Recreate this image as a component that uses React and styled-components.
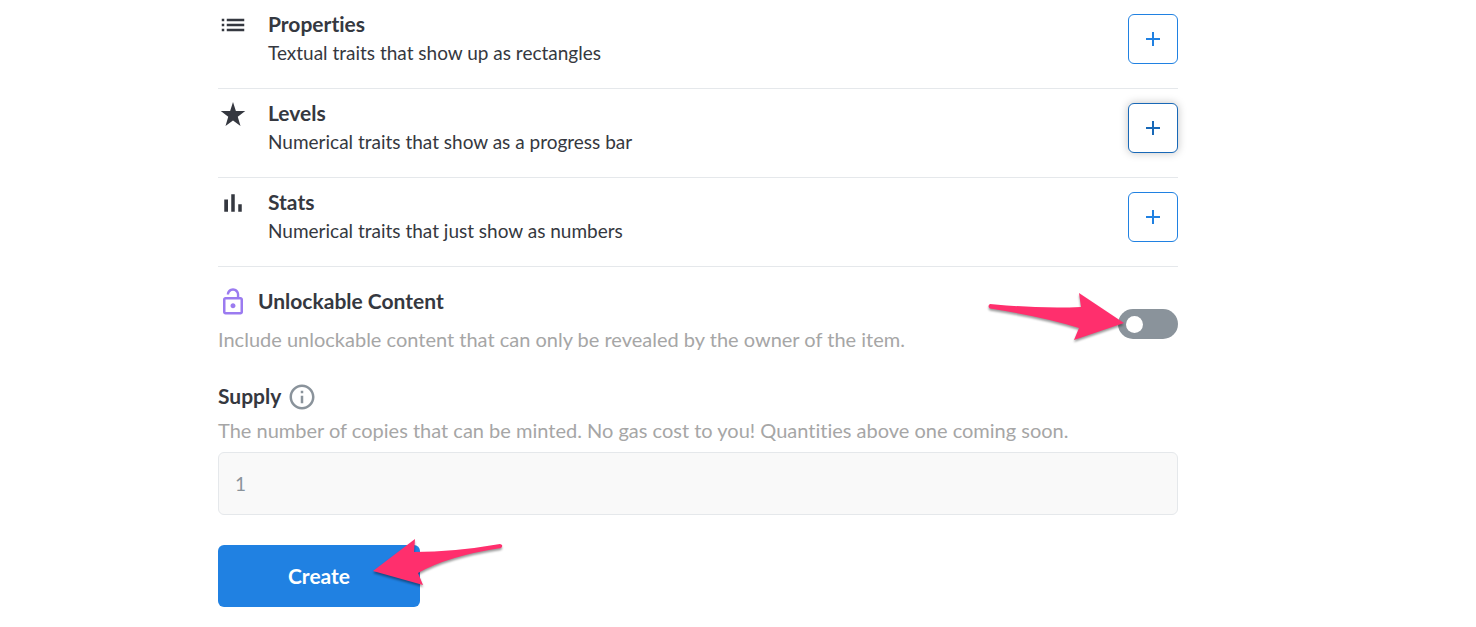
import React from "react";
import styled, { createGlobalStyle } from "styled-components";

const traits = [
  {
    title: "Properties",
    text: "Textual traits that show up as rectangles",
    icon: "M3 13h2v-2H3v2zm0 4h2v-2H3v2zm0-8h2V7H3v2zm4 4h14v-2H7v2zm0 4h14v-2H7v2zM7 7v2h14V7H7z",
  },
  {
    title: "Levels",
    text: "Numerical traits that show as a progress bar",
    icon: "M12 2.4l2.3 7.2h7.5l-6 4.6 2.2 7.4-6-4.5-6 4.5 2.2-7.4-6-4.6h7.5z",
    active: true,
  },
  {
    title: "Stats",
    text: "Numerical traits that just show as numbers",
    icon: "M5 9.2h3V19H5zM10.6 5h2.8v14h-2.8zm5.6 8H19v6h-2.8z",
  },
];

function App() {
  return (
    <>
      <GlobalStyle />
      <Page>
        <Form onSubmit={(e) => e.preventDefault()}>
          {traits.map((trait) => (
            <TraitRow key={trait.title}>
              <TraitIcon viewBox="0 0 24 24" aria-hidden="true">
                <path d={trait.icon} />
              </TraitIcon>
              <TraitInfo>
                <Heading>{trait.title}</Heading>
                <TraitText>{trait.text}</TraitText>
              </TraitInfo>
              <AddButton
                type="button"
                aria-label={`Add ${trait.title}`}
                $active={trait.active}
              >
                <svg viewBox="0 0 14 14" aria-hidden="true">
                  <path d="M0 7h14M7 0v14" />
                </svg>
              </AddButton>
            </TraitRow>
          ))}

          <UnlockRow>
            <div>
              <UnlockTitle>
                <LockIcon viewBox="0 0 24 24" aria-hidden="true">
                  <path d="M12 17c1.1 0 2-.9 2-2s-.9-2-2-2-2 .9-2 2 .9 2 2 2zm6-9h-1V6c0-2.76-2.24-5-5-5S7 3.24 7 6h1.9c0-1.71 1.39-3.1 3.1-3.1 1.71 0 3.1 1.39 3.1 3.1v2H6c-1.1 0-2 .9-2 2v10c0 1.1.9 2 2 2h12c1.1 0 2-.9 2-2V10c0-1.1-.9-2-2-2zm0 12H6V10h12v10z" />
                </LockIcon>
                <Heading as="label" htmlFor="unlockable">
                  Unlockable Content
                </Heading>
              </UnlockTitle>
              <Hint>
                Include unlockable content that can only be revealed by the
                owner of the item.
              </Hint>
            </div>
            <SwitchBox>
              <Switch type="checkbox" role="switch" id="unlockable" />
              <SwitchArrow viewBox="0 0 140 56" aria-hidden="true">
                <path d="M4 14Q55 19 95 17L93 3L138 33L88 50L93 38Q58 27 4 18.5Q1 16 4 14Z" />
              </SwitchArrow>
            </SwitchBox>
          </UnlockRow>

          <SupplyTitle>
            <Heading as="label" htmlFor="supply">
              Supply
            </Heading>
            <InfoIcon viewBox="0 0 24 24" aria-hidden="true">
              <path d="M11 7h2v2h-2zm0 4h2v6h-2zm1-9C6.48 2 2 6.48 2 12s4.48 10 10 10 10-4.48 10-10S17.52 2 12 2zm0 18c-4.41 0-8-3.59-8-8s3.59-8 8-8 8 3.59 8 8-3.59 8-8 8z" />
            </InfoIcon>
          </SupplyTitle>
          <Hint>
            The number of copies that can be minted. No gas cost to you!
            Quantities above one coming soon.
          </Hint>
          <SupplyInput id="supply" type="text" defaultValue="1" readOnly />

          <CreateBox>
            <CreateButton type="submit">Create</CreateButton>
            <CreateArrow viewBox="0 0 140 56" aria-hidden="true">
              <path d="M3 35L45 3L44 16Q84 16 130 8Q134 9 131 12Q78 20 48 37L53 49Z" />
            </CreateArrow>
          </CreateBox>
        </Form>
      </Page>
    </>
  );
}

export default App;

const GlobalStyle = createGlobalStyle`
  * {
    box-sizing: border-box;
  }
  body {
    margin: 0;
    background-color: #ffffff;
    color: #353840;
    font-family: Lato, "Liberation Sans", sans-serif;
    font-size: 19px;
    font-variant-ligatures: none;
  }
`;

const Page = styled.main`
  padding-right: 80px;
  @media screen and (max-width: 1040px) {
    padding: 0 20px;
  }
`;

const Form = styled.form`
  max-width: 960px;
  margin: 0 auto;
`;

const TraitRow = styled.div`
  display: flex;
  align-items: flex-start;
  gap: 20px;
  padding: 9px 0 21px;
  border-bottom: 1px solid #e5e8eb;
`;

const TraitIcon = styled.svg`
  flex: none;
  width: 30px;
  height: 30px;
  margin-top: 1px;
  fill: #353840;
`;

const TraitInfo = styled.div`
  flex: 1;
`;

const Heading = styled.h2`
  margin: 0;
  font-size: 21px;
  font-weight: 700;
  line-height: 29px;
  color: #353840;
`;

const TraitText = styled.p`
  margin: 0;
  font-size: 19px;
  line-height: 29px;
`;

const AddButton = styled.button`
  display: flex;
  align-items: center;
  justify-content: center;
  flex: none;
  width: 50px;
  height: 50px;
  margin-top: 5px;
  padding: 0;
  border: 1px solid ${({ $active }) => ($active ? "#1868b7" : "#2081e2")};
  border-radius: 6px;
  background-color: #ffffff;
  color: ${({ $active }) => ($active ? "#1868b7" : "#2081e2")};
  box-shadow: ${({ $active }) =>
    $active ? "0 0 8px rgba(14, 14, 14, 0.25)" : "none"};
  cursor: pointer;

  svg {
    width: 14px;
    height: 14px;
    stroke: currentColor;
    stroke-width: 2;
  }
`;

const UnlockRow = styled.div`
  display: flex;
  align-items: center;
  justify-content: space-between;
  padding-top: 19px;
`;

const UnlockTitle = styled.div`
  display: flex;
  align-items: flex-start;
  gap: 10px;
  margin-bottom: 8px;
`;

const LockIcon = styled.svg`
  width: 30px;
  height: 30px;
  margin-top: 1px;
  fill: #9b7bf0;
`;

const Hint = styled.p`
  margin: 0;
  font-size: 20px;
  line-height: 29px;
  color: #a6a6a6;
`;

const SwitchBox = styled.div`
  position: relative;
  flex: none;
  height: 30px;
  margin-top: 8px;
`;

const Switch = styled.input`
  appearance: none;
  display: flex;
  align-items: center;
  width: 60px;
  height: 30px;
  margin: 0;
  padding: 0 8px;
  border-radius: 15px;
  background-color: #8a939b;
  cursor: pointer;

  &::before {
    content: "";
    width: 17px;
    height: 17px;
    border-radius: 50%;
    background-color: #ffffff;
  }
  &:checked {
    justify-content: flex-end;
    background-color: #2081e2;
  }
`;

const Arrow = styled.svg`
  position: absolute;
  width: 140px;
  height: 56px;
  fill: #ff2f6d;
  filter: drop-shadow(0 2px 1px rgba(0, 0, 0, 0.4));
  pointer-events: none;
`;

const SwitchArrow = styled(Arrow)`
  top: -19px;
  right: 52px;
`;

const SupplyTitle = styled.div`
  display: flex;
  align-items: flex-start;
  gap: 6px;
  margin-top: 27px;
  margin-bottom: 4px;
`;

const InfoIcon = styled.svg`
  width: 30px;
  height: 30px;
  margin-top: 1px;
  fill: #8a939b;
`;

const SupplyInput = styled.input`
  display: block;
  width: 100%;
  height: 63px;
  margin-top: 7px;
  padding: 0 16px;
  border: 1px solid #e5e8eb;
  border-radius: 6px;
  background-color: #f9f9f9;
  color: #8a939b;
  font-family: inherit;
  font-size: 19px;
`;

const CreateBox = styled.div`
  position: relative;
  width: fit-content;
  margin-top: 30px;
`;

const CreateButton = styled.button`
  padding: 16px 70px;
  border: none;
  border-radius: 6px;
  background-color: #2081e2;
  color: #ffffff;
  font-family: inherit;
  font-size: 21px;
  font-weight: 700;
  line-height: 30px;
  cursor: pointer;
`;

const CreateArrow = styled(Arrow)`
  top: -9px;
  left: 152px;
`;
